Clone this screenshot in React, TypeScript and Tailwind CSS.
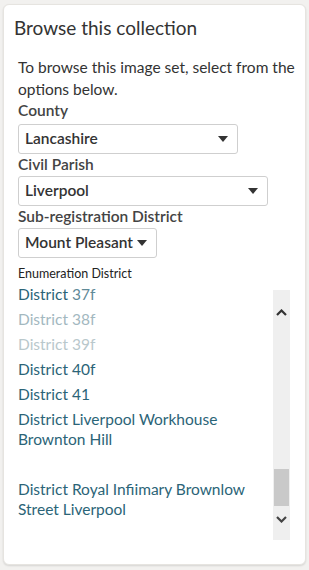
import React from "react";

const font = { fontFamily: "Lato, 'Liberation Sans', sans-serif" };

function Select({ value, width }: { value: string; width: string }) {
  return (
    <div
      className={`flex items-center justify-between h-[30px] ${width} border border-[#cfcfcf] rounded-[3px] bg-white pl-[6px] pr-[9px]`}
    >
      <span className="text-[15.5px] font-semibold text-[#333] leading-none whitespace-nowrap">{value}</span>
      <svg width="10" height="6" viewBox="0 0 10 6" className="shrink-0 ml-[4px]">
        <path d="M0 0 H10 L5 6 Z" fill="#333" />
      </svg>
    </div>
  );
}

const districts: { label: string; num: string; faded?: string }[] = [
  { label: "District", num: "37f", faded: "text-[#5f8a98]" },
  { label: "District", num: "38f", faded: "text-[#a3b8bf]" },
  { label: "District", num: "39f", faded: "text-[#b9c8cc]" },
  { label: "District", num: "40f" },
  { label: "District", num: "41" },
];

export default function App() {
  return (
    <div className="min-h-[570px] bg-[#f2f1ef] pt-[4px] px-[3px]" style={font}>
      <div className="w-[303px] h-[561px] bg-white rounded-[6px] border border-[#e6e4e0] shadow-[0_1px_2px_rgba(0,0,0,0.12)] flex flex-col">
        <h2 className="pl-[10px] pt-[11px] text-[19px] leading-[24px] text-[#333]">
          Browse this collection
        </h2>
        <div className="pl-[14px] pr-[4px] pt-[16px] flex flex-col">
          <p className="text-[15.5px] leading-[22px] text-[#333]">
            To browse this image set, select from the options below.
          </p>
          <label className="text-[15.5px] font-semibold leading-[20px] text-[#444]">County</label>
          <div className="mt-[4px]">
            <Select value="Lancashire" width="w-[220px]" />
          </div>
          <label className="text-[15.5px] font-semibold leading-[20px] text-[#444]">Civil Parish</label>
          <div className="mt-[2px]">
            <Select value="Liverpool" width="w-[250px]" />
          </div>
          <label className="text-[15.5px] font-semibold leading-[20px] text-[#444]">Sub-registration District</label>
          <div className="mt-[2px]">
            <Select value="Mount Pleasant" width="w-[139px]" />
          </div>
          <label className="mt-[8px] text-[12.5px] font-normal leading-[16px] text-[#222]">Enumeration District</label>
          <div className="flex h-[258px] mr-[11px]">
            <ul className="flex-1 overflow-hidden text-[15.5px] leading-[20px] text-[#2b6477]">
              {districts.map((d) => (
                <li key={d.num} className={`py-[2px] h-[25px] ${d.num === "37f" ? "" : d.faded ?? ""}`}>
                  {d.label} <span className={d.num === "37f" ? d.faded : ""}>{d.num}</span>
                </li>
              ))}
              <li className="py-[2px] mb-[26px] pr-[50px]">District Liverpool Workhouse Brownton Hill</li>
              <li className="py-[2px] pr-[20px]">District Royal Infiimary Brownlow Street Liverpool</li>
            </ul>
            <div className="w-[17px] mt-[8px] h-[250px] bg-[#efefef] flex flex-col items-center">
              <div className="h-[44px] flex items-center justify-center">
                <svg width="11" height="7" viewBox="0 0 11 7">
                  <path d="M1 6 L5.5 1.5 L10 6" stroke="#333" strokeWidth="2.2" fill="none" />
                </svg>
              </div>
              <div className="flex-1" />
              <div className="w-[15px] h-[37px] bg-[#c9c9c9]" />
              <div className="h-[26px] flex items-center justify-center">
                <svg width="11" height="7" viewBox="0 0 11 7">
                  <path d="M1 1 L5.5 5.5 L10 1" stroke="#444" strokeWidth="2.2" fill="none" />
                </svg>
              </div>
              <div className="h-[8px]" />
            </div>
          </div>
        </div>
      </div>
    </div>
  );
}
